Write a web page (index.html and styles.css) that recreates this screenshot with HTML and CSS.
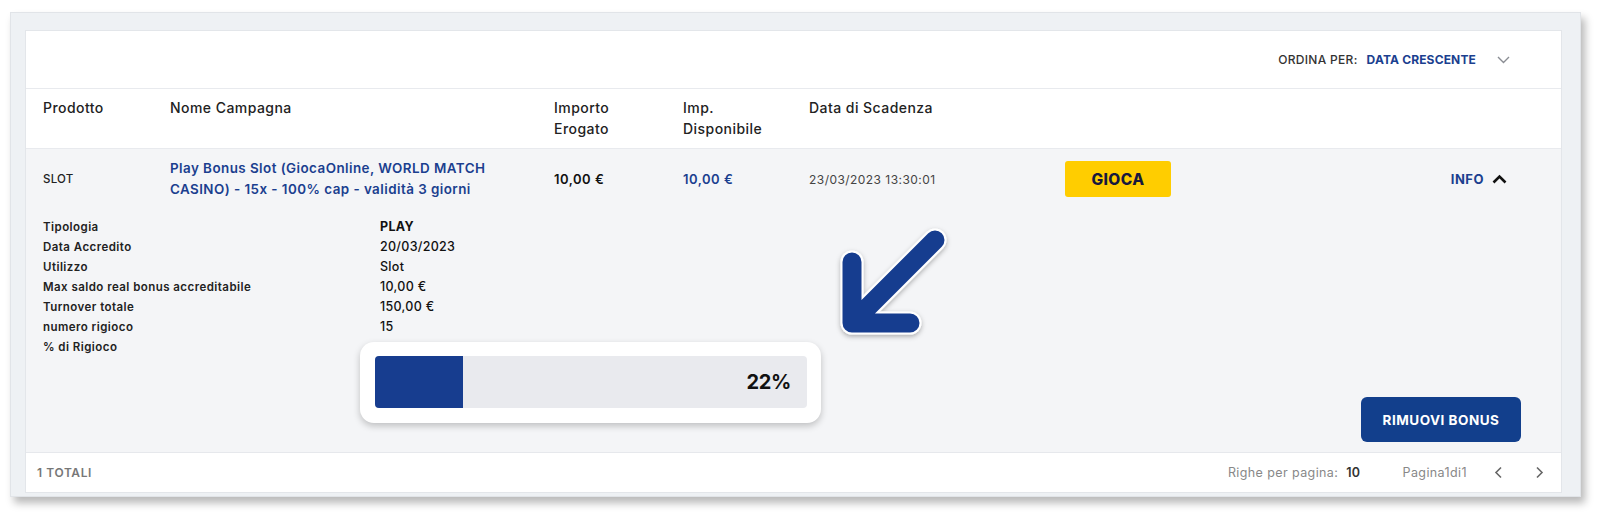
FILE: index.html
```html
<!DOCTYPE html>
<html lang="it">
<head>
<meta charset="utf-8">
<title>Bonus</title>
<link rel="stylesheet" href="styles.css">
</head>
<body>
<div class="page">
  <div class="frame">
    <div class="panel">
      <div class="toolbar">
        <span class="sort-label">ORDINA PER:</span>
        <span class="sort-value">DATA CRESCENTE</span>
        <svg class="sort-chev" width="13" height="8" viewBox="0 0 13 8"><polyline points="1,1 6.5,6.5 12,1" fill="none" stroke="#8a8d93" stroke-width="1.4"/></svg>
      </div>
      <div class="grid thead">
        <div>Prodotto</div>
        <div>Nome Campagna</div>
        <div>Importo<br>Erogato</div>
        <div>Imp.<br>Disponibile</div>
        <div>Data di Scadenza</div>
        <div></div>
        <div></div>
      </div>
      <div class="tbody">
        <div class="grid row">
          <div class="prod">SLOT</div>
          <div class="camp">Play Bonus Slot (GiocaOnline, WORLD MATCH<br>CASINO) - 15x - 100% cap - validità 3 giorni</div>
          <div class="amt">10,00 €</div>
          <div class="amt blue">10,00 €</div>
          <div class="date">23/03/2023 13:30:01</div>
          <div><button class="btn-gioca">GIOCA</button></div>
          <div class="info">INFO <svg width="15" height="10" viewBox="0 0 15 10"><polyline points="1.5,8.5 7.5,2.5 13.5,8.5" fill="none" stroke="#111" stroke-width="2.6"/></svg></div>
        </div>
        <div class="details">
          <div class="dgrid">
            <div class="dl">Tipologia</div><div class="dv strong">PLAY</div>
            <div class="dl">Data Accredito</div><div class="dv">20/03/2023</div>
            <div class="dl">Utilizzo</div><div class="dv">Slot</div>
            <div class="dl">Max saldo real bonus accreditabile</div><div class="dv">10,00 €</div>
            <div class="dl">Turnover totale</div><div class="dv">150,00 €</div>
            <div class="dl">numero rigioco</div><div class="dv">15</div>
            <div class="dl">% di Rigioco</div>
            <div class="dv">
              <div class="highlight">
                <div class="bar">
                  <div class="fill" style="width:20.4%"></div>
                  <span class="pct">22%</span>
                </div>
              </div>
            </div>
          </div>
          <button class="btn-remove">RIMUOVI BONUS</button>
        </div>
      </div>
      <div class="footer">
        <span class="total">1 TOTALI</span>
        <div class="pager">
          <span class="rows">Righe per pagina: <b>10</b></span>
          <span class="pages">Pagina1di1</span>
          <svg class="pchev" width="9" height="13" viewBox="0 0 9 13"><polyline points="7,1.5 2,6.5 7,11.5" fill="none" stroke="#666" stroke-width="1.6"/></svg>
          <svg class="pchev" width="9" height="13" viewBox="0 0 9 13"><polyline points="2,1.5 7,6.5 2,11.5" fill="none" stroke="#666" stroke-width="1.6"/></svg>
        </div>
      </div>
    </div>
  </div>
  <svg class="arrow" width="140" height="140" viewBox="0 0 140 140">
    <defs>
      <filter id="sh" x="-30%" y="-30%" width="160%" height="160%">
        <feDropShadow dx="0" dy="2" stdDeviation="2.5" flood-color="#000" flood-opacity="0.3"/>
      </filter>
    </defs>
    <g filter="url(#sh)" fill="none" stroke-linecap="round" stroke-linejoin="round">
      <path d="M22 42 V103 H80 M22 103 L105 20" stroke="#ffffff" stroke-width="23"/>
      <path d="M22 42 V103 H80 M22 103 L105 20" stroke="#173d8f" stroke-width="19"/>
    </g>
  </svg>
</div>
</body>
</html>
```

FILE: styles.css
```css
* { box-sizing: border-box; }
html, body { margin: 0; padding: 0; background: #ffffff; }
body {
  font-family: Inter, "Liberation Sans", sans-serif;
  color: #222;
  width: 1600px;
  height: 513px;
  overflow: hidden;
}
.page {
  position: relative;
  padding: 12px 0 0 10px;
}
.frame {
  width: 1571px;
  background: #eef1f4;
  border: 1px solid #e1e4e8;
  padding: 17px 18px 3px 14px;
  box-shadow: 4px 6px 8px rgba(0,0,0,0.28);
}
.panel {
  width: 1537px;
  border: 1px solid #e3e6ea;
  background: #ffffff;
}
.toolbar {
  height: 58px;
  border-bottom: 1px solid #e8eaee;
  display: flex;
  align-items: center;
  justify-content: flex-end;
  padding-right: 51px;
  font-size: 12px;
}
.sort-label { color: #333; font-weight: 500; margin-right: 9px; letter-spacing: 0.3px; }
.sort-value { color: #1b3f8f; font-weight: 700; letter-spacing: 0.15px; }
.sort-chev { margin-left: 21px; }
.grid {
  display: grid;
  grid-template-columns: 127px 384px 129px 126px 256px 106px 1fr;
  padding-left: 17px;
  padding-right: 54px;
}
.thead {
  height: 60px;
  border-bottom: 1px solid #e8eaee;
  padding-top: 8px;
  font-size: 14px;
  line-height: 21px;
  font-weight: 500;
  letter-spacing: 0.45px;
  color: #222;
}
.tbody { background: #f4f5f7; }
.row {
  align-items: center;
  padding-top: 9px;
  padding-bottom: 17px;
  font-size: 12px;
}
.prod { font-size: 11.5px; font-weight: 500; color: #222; letter-spacing: 0.2px; }
.camp { color: #1b3f8f; font-weight: 600; font-size: 13.4px; line-height: 21px; letter-spacing: 0.45px; }
.amt { font-weight: 600; font-size: 13px; color: #111; letter-spacing: 0.5px; }
.amt.blue { color: #1b3f8f; }
.date { color: #444; font-size: 12px; letter-spacing: 0.45px; }
.btn-gioca {
  width: 106px;
  height: 36px;
  border: none;
  border-radius: 3px;
  background: #ffcd00;
  color: #16183d;
  font-family: inherit;
  font-weight: 800;
  font-size: 15.5px;
  letter-spacing: 0.4px;
  padding: 0;
}
.info {
  justify-self: end;
  display: flex;
  align-items: center;
  gap: 8px;
  color: #1b3f8f;
  font-weight: 700;
  font-size: 13px;
  letter-spacing: 0.5px;
}
.details {
  display: flex;
  justify-content: space-between;
  align-items: flex-start;
  padding: 0 40px 10px 17px;
}
.dgrid {
  display: grid;
  grid-template-columns: 337px 460px;
  grid-template-rows: repeat(6, 20px) auto;
  line-height: 20px;
  margin-bottom: 19px;
}
.dl { font-size: 11.5px; font-weight: 600; color: #222; letter-spacing: 0.45px; }
.dv { font-size: 12.5px; font-weight: 500; color: #111; letter-spacing: 0.3px; }
.dv.strong { font-weight: 700; }
.highlight {
  margin: 5px 0 0 -20px;
  width: 461px;
  height: 81px;
  background: #ffffff;
  border-radius: 14px;
  padding: 14px 14px 15px 15px;
  box-shadow: 0 3px 7px rgba(0,0,0,0.22);
  position: relative;
}
.bar {
  position: relative;
  height: 52px;
  background: #e9eaee;
  border-radius: 4px;
  overflow: hidden;
  display: flex;
  align-items: center;
  justify-content: flex-end;
  padding-right: 16px;
}
.fill {
  position: absolute;
  left: 0; top: 0; bottom: 0;
  background: #173d8f;
}
.pct { position: relative; font-size: 20px; font-weight: 700; color: #111; letter-spacing: -0.3px; }
.btn-remove {
  align-self: flex-end;
  width: 160px;
  height: 45px;
  border: none;
  border-radius: 6px;
  background: #123f8c;
  color: #ffffff;
  font-family: inherit;
  font-weight: 700;
  font-size: 13.5px;
  letter-spacing: 0.5px;
  padding: 0;
}
.footer {
  height: 40px;
  border-top: 1px solid #e6e8ec;
  display: flex;
  align-items: center;
  justify-content: space-between;
  padding: 0 17px 0 11px;
}
.total { font-size: 12px; font-weight: 600; color: #777; letter-spacing: 0.6px; }
.pager { display: flex; align-items: center; font-size: 12.5px; color: #888; letter-spacing: 0.4px; }
.rows b { color: #333; font-weight: 600; margin-left: 4px; }
.pages { margin-left: 42px; }
.pchev { margin-left: 27px; }
.pchev + .pchev { margin-left: 32px; }
.arrow {
  position: absolute;
  left: 830px;
  top: 220px;
}
```
